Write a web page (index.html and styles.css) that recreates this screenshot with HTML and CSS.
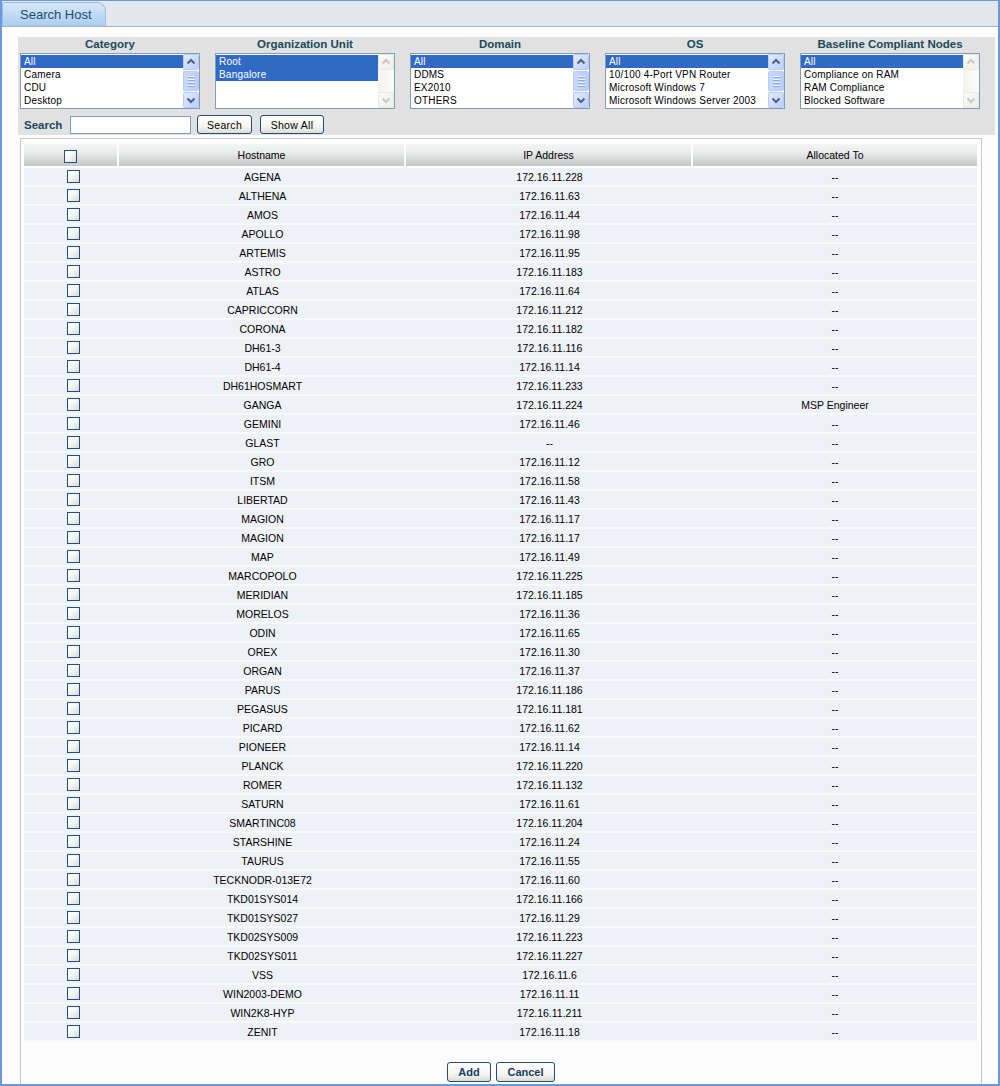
FILE: index.html
```html
<!DOCTYPE html>
<html lang="en">
<head>
    <meta charset="UTF-8" />
    <title>Search Host</title>
    <link rel="stylesheet" href="styles.css">
</head>
<body>
<div class="window">
    <div class="tab-bar">
        <div class="tab">Search Host</div>
    </div>

    <div class="filters">
        <div class="filter-row">
            <div class="filter">
                <div class="filter-title">Category</div>
                <div class="listbox">
                    <ul>
                        <li class="selected">All</li>
                        <li>Camera</li>
                        <li>CDU</li>
                        <li>Desktop</li>
                    </ul>
                    <div class="vscroll">
                        <span class="sb-btn"><svg viewBox="0 0 14 14"><path d="M3.5 8.5 L7 5 L10.5 8.5" /></svg></span>
                        <span class="sb-thumb"><i></i><i></i><i></i><i></i></span>
                        <span class="sb-btn"><svg viewBox="0 0 14 14"><path d="M3.5 5.5 L7 9 L10.5 5.5" /></svg></span>
                    </div>
                </div>
            </div>
            <div class="filter">
                <div class="filter-title">Organization Unit</div>
                <div class="listbox">
                    <ul>
                        <li class="selected">Root</li>
                        <li class="selected">Bangalore</li>
                    </ul>
                    <div class="vscroll disabled">
                        <span class="sb-btn"><svg viewBox="0 0 14 14"><path d="M3.5 8.5 L7 5 L10.5 8.5" /></svg></span>
                        <span class="sb-btn"><svg viewBox="0 0 14 14"><path d="M3.5 5.5 L7 9 L10.5 5.5" /></svg></span>
                    </div>
                </div>
            </div>
            <div class="filter">
                <div class="filter-title">Domain</div>
                <div class="listbox">
                    <ul>
                        <li class="selected">All</li>
                        <li>DDMS</li>
                        <li>EX2010</li>
                        <li>OTHERS</li>
                    </ul>
                    <div class="vscroll">
                        <span class="sb-btn"><svg viewBox="0 0 14 14"><path d="M3.5 8.5 L7 5 L10.5 8.5" /></svg></span>
                        <span class="sb-thumb"><i></i><i></i><i></i><i></i></span>
                        <span class="sb-btn"><svg viewBox="0 0 14 14"><path d="M3.5 5.5 L7 9 L10.5 5.5" /></svg></span>
                    </div>
                </div>
            </div>
            <div class="filter">
                <div class="filter-title">OS</div>
                <div class="listbox">
                    <ul>
                        <li class="selected">All</li>
                        <li>10/100 4-Port VPN Router</li>
                        <li>Microsoft Windows 7</li>
                        <li>Microsoft Windows Server 2003</li>
                    </ul>
                    <div class="vscroll">
                        <span class="sb-btn"><svg viewBox="0 0 14 14"><path d="M3.5 8.5 L7 5 L10.5 8.5" /></svg></span>
                        <span class="sb-thumb"><i></i><i></i><i></i><i></i></span>
                        <span class="sb-btn"><svg viewBox="0 0 14 14"><path d="M3.5 5.5 L7 9 L10.5 5.5" /></svg></span>
                    </div>
                </div>
            </div>
            <div class="filter">
                <div class="filter-title">Baseline Compliant Nodes</div>
                <div class="listbox">
                    <ul>
                        <li class="selected">All</li>
                        <li>Compliance on RAM</li>
                        <li>RAM Compliance</li>
                        <li>Blocked Software</li>
                    </ul>
                    <div class="vscroll disabled">
                        <span class="sb-btn"><svg viewBox="0 0 14 14"><path d="M3.5 8.5 L7 5 L10.5 8.5" /></svg></span>
                        <span class="sb-btn"><svg viewBox="0 0 14 14"><path d="M3.5 5.5 L7 9 L10.5 5.5" /></svg></span>
                    </div>
                </div>
            </div>
        </div>

        <div class="search-row">
            <label class="search-label" for="search">Search</label>
            <input class="search-input" type="text" id="search" />
            <button class="btn btn-search">Search</button>
            <button class="btn btn-showall">Show All</button>
        </div>
    </div>

    <div class="results">
        <table class="hosts">
            <colgroup>
                <col style="width:95px">
                <col style="width:287px">
                <col style="width:287px">
                <col style="width:284px">
            </colgroup>
            <thead>
                <tr>
                    <th><span class="check"></span></th>
                    <th>Hostname</th>
                    <th>IP Address</th>
                    <th>Allocated To</th>
                </tr>
            </thead>
            <tbody>
                <tr><td><span class="check"></span></td><td>AGENA</td><td>172.16.11.228</td><td>--</td></tr>
                <tr><td><span class="check"></span></td><td>ALTHENA</td><td>172.16.11.63</td><td>--</td></tr>
                <tr><td><span class="check"></span></td><td>AMOS</td><td>172.16.11.44</td><td>--</td></tr>
                <tr><td><span class="check"></span></td><td>APOLLO</td><td>172.16.11.98</td><td>--</td></tr>
                <tr><td><span class="check"></span></td><td>ARTEMIS</td><td>172.16.11.95</td><td>--</td></tr>
                <tr><td><span class="check"></span></td><td>ASTRO</td><td>172.16.11.183</td><td>--</td></tr>
                <tr><td><span class="check"></span></td><td>ATLAS</td><td>172.16.11.64</td><td>--</td></tr>
                <tr><td><span class="check"></span></td><td>CAPRICCORN</td><td>172.16.11.212</td><td>--</td></tr>
                <tr><td><span class="check"></span></td><td>CORONA</td><td>172.16.11.182</td><td>--</td></tr>
                <tr><td><span class="check"></span></td><td>DH61-3</td><td>172.16.11.116</td><td>--</td></tr>
                <tr><td><span class="check"></span></td><td>DH61-4</td><td>172.16.11.14</td><td>--</td></tr>
                <tr><td><span class="check"></span></td><td>DH61HOSMART</td><td>172.16.11.233</td><td>--</td></tr>
                <tr><td><span class="check"></span></td><td>GANGA</td><td>172.16.11.224</td><td>MSP Engineer</td></tr>
                <tr><td><span class="check"></span></td><td>GEMINI</td><td>172.16.11.46</td><td>--</td></tr>
                <tr><td><span class="check"></span></td><td>GLAST</td><td>--</td><td>--</td></tr>
                <tr><td><span class="check"></span></td><td>GRO</td><td>172.16.11.12</td><td>--</td></tr>
                <tr><td><span class="check"></span></td><td>ITSM</td><td>172.16.11.58</td><td>--</td></tr>
                <tr><td><span class="check"></span></td><td>LIBERTAD</td><td>172.16.11.43</td><td>--</td></tr>
                <tr><td><span class="check"></span></td><td>MAGION</td><td>172.16.11.17</td><td>--</td></tr>
                <tr><td><span class="check"></span></td><td>MAGION</td><td>172.16.11.17</td><td>--</td></tr>
                <tr><td><span class="check"></span></td><td>MAP</td><td>172.16.11.49</td><td>--</td></tr>
                <tr><td><span class="check"></span></td><td>MARCOPOLO</td><td>172.16.11.225</td><td>--</td></tr>
                <tr><td><span class="check"></span></td><td>MERIDIAN</td><td>172.16.11.185</td><td>--</td></tr>
                <tr><td><span class="check"></span></td><td>MORELOS</td><td>172.16.11.36</td><td>--</td></tr>
                <tr><td><span class="check"></span></td><td>ODIN</td><td>172.16.11.65</td><td>--</td></tr>
                <tr><td><span class="check"></span></td><td>OREX</td><td>172.16.11.30</td><td>--</td></tr>
                <tr><td><span class="check"></span></td><td>ORGAN</td><td>172.16.11.37</td><td>--</td></tr>
                <tr><td><span class="check"></span></td><td>PARUS</td><td>172.16.11.186</td><td>--</td></tr>
                <tr><td><span class="check"></span></td><td>PEGASUS</td><td>172.16.11.181</td><td>--</td></tr>
                <tr><td><span class="check"></span></td><td>PICARD</td><td>172.16.11.62</td><td>--</td></tr>
                <tr><td><span class="check"></span></td><td>PIONEER</td><td>172.16.11.14</td><td>--</td></tr>
                <tr><td><span class="check"></span></td><td>PLANCK</td><td>172.16.11.220</td><td>--</td></tr>
                <tr><td><span class="check"></span></td><td>ROMER</td><td>172.16.11.132</td><td>--</td></tr>
                <tr><td><span class="check"></span></td><td>SATURN</td><td>172.16.11.61</td><td>--</td></tr>
                <tr><td><span class="check"></span></td><td>SMARTINC08</td><td>172.16.11.204</td><td>--</td></tr>
                <tr><td><span class="check"></span></td><td>STARSHINE</td><td>172.16.11.24</td><td>--</td></tr>
                <tr><td><span class="check"></span></td><td>TAURUS</td><td>172.16.11.55</td><td>--</td></tr>
                <tr><td><span class="check"></span></td><td>TECKNODR-013E72</td><td>172.16.11.60</td><td>--</td></tr>
                <tr><td><span class="check"></span></td><td>TKD01SYS014</td><td>172.16.11.166</td><td>--</td></tr>
                <tr><td><span class="check"></span></td><td>TKD01SYS027</td><td>172.16.11.29</td><td>--</td></tr>
                <tr><td><span class="check"></span></td><td>TKD02SYS009</td><td>172.16.11.223</td><td>--</td></tr>
                <tr><td><span class="check"></span></td><td>TKD02SYS011</td><td>172.16.11.227</td><td>--</td></tr>
                <tr><td><span class="check"></span></td><td>VSS</td><td>172.16.11.6</td><td>--</td></tr>
                <tr><td><span class="check"></span></td><td>WIN2003-DEMO</td><td>172.16.11.11</td><td>--</td></tr>
                <tr><td><span class="check"></span></td><td>WIN2K8-HYP</td><td>172.16.11.211</td><td>--</td></tr>
                <tr><td><span class="check"></span></td><td>ZENIT</td><td>172.16.11.18</td><td>--</td></tr>
            </tbody>
        </table>

        <div class="actions">
            <button class="btn btn-strong btn-add">Add</button>
            <button class="btn btn-strong btn-cancel">Cancel</button>
        </div>
    </div>
</div>
</body>
</html>
```

FILE: styles.css
```css
body {
    margin: 0;
    font-family: "Liberation Sans", Arial, sans-serif;
    font-size: 11px;
    color: #000;
    background: #fff;
}

.window {
    height: 1086px;
    box-sizing: border-box;
    border: 2px solid #6b98d8;
    border-top-width: 1px;
    display: flex;
    flex-direction: column;
    background: #fdfdfd;
}

.tab-bar {
    height: 25px;
    background: #e3e8ec;
    border-bottom: 1px solid #a9b3b5;
    display: flex;
    align-items: flex-end;
}

.tab {
    height: 24px;
    width: 104px;
    box-sizing: border-box;
    border: 1px solid #97bde6;
    border-bottom: none;
    border-radius: 3px 9px 0 0;
    background: linear-gradient(#d8e8f8, #a9cdf1);
    color: #1e4c6c;
    font-size: 13px;
    line-height: 23px;
    padding-left: 17px;
}

/* filtros */
.filters {
    margin: 10px 3px 0 16px;
    background: #e1e1e1;
    padding: 1px 2px 0;
    height: 98px;
    box-sizing: border-box;
}

.filter-row {
    display: flex;
    gap: 15px;
}

.filter {
    width: 180px;
}

.filter-title {
    text-align: center;
    font-weight: bold;
    font-size: 11.5px;
    color: #1b4a5d;
    height: 15px;
    line-height: 12px;
}

.listbox {
    height: 56px;
    box-sizing: border-box;
    border: 1px solid #7f9db9;
    background: #fff;
    display: flex;
}

.listbox ul {
    flex: 1;
    margin: 0;
    padding: 1px 0 0;
    list-style: none;
    overflow: hidden;
}

.listbox li {
    height: 13px;
    line-height: 13px;
    padding-left: 3px;
    font-size: 10px;
    letter-spacing: 0.2px;
    white-space: nowrap;
    overflow: hidden;
}

.listbox li.selected {
    background: #316ac5;
    color: #fff;
}

.vscroll {
    width: 16px;
    display: flex;
    flex-direction: column;
    justify-content: space-between;
    background: linear-gradient(90deg, #f3f2ec, #fdfdfb);
}

.sb-btn {
    height: 16px;
    box-sizing: border-box;
    border: 1px solid #b7cbf6;
    border-radius: 2px;
    background: linear-gradient(135deg, #e2ebfe, #bccff9);
    display: flex;
    align-items: center;
    justify-content: center;
}

.sb-btn svg {
    width: 14px;
    height: 14px;
    fill: none;
    stroke: #4d6185;
    stroke-width: 2;
}

.sb-thumb {
    height: 20px;
    box-sizing: border-box;
    border: 1px solid #b7cbf6;
    border-radius: 2px;
    background: linear-gradient(90deg, #c9d8fc, #bacdf8);
    display: flex;
    flex-direction: column;
    align-items: center;
    justify-content: center;
    gap: 1px;
}

.sb-thumb i {
    display: block;
    width: 7px;
    height: 1px;
    background: #eef3fe;
    border-bottom: 1px solid #8eaae6;
}

.vscroll.disabled .sb-btn {
    border-color: #e9e9e2;
    background: linear-gradient(135deg, #fbfbf8, #eeede6);
}

.vscroll.disabled .sb-btn svg {
    stroke: #c9c8bf;
}

.search-row {
    display: flex;
    align-items: center;
    margin-top: 6px;
    padding-left: 4px;
}

.search-label {
    font-weight: bold;
    font-size: 11.5px;
    color: #1b4a5d;
    width: 46px;
}

.search-input {
    width: 121px;
    height: 18px;
    box-sizing: border-box;
    border: 1px solid #7f9db9;
    margin: 0 6px 0 0;
    padding: 0 2px;
}

.btn {
    height: 19px;
    box-sizing: border-box;
    border: 1px solid #1f4e79;
    border-radius: 3px;
    background: linear-gradient(#ffffff, #f3f3ee 65%, #dedcd3);
    font-family: inherit;
    font-size: 10.5px;
    letter-spacing: 0.3px;
    color: #000;
    padding: 0;
}

.btn-search {
    width: 55px;
    margin-right: 8px;
}

.btn-showall {
    width: 64px;
}

/* tabela */
.results {
    flex: 1;
    margin: 3px 16px 0 18px;
    border: 1px solid #c9c9c9;
    border-bottom: none;
    padding: 5px 3px 0;
    background: #fdfdfd;
}

.hosts {
    width: 953px;
    border-collapse: separate;
    border-spacing: 0;
    table-layout: fixed;
}

.hosts th {
    padding: 0;
    line-height: 22px;
    font-weight: normal;
    font-size: 10.5px;
    background: linear-gradient(#f4f6f6, #e7e9e9 45%, #d4d7d7 70%, #c4c8c8);
    border-right: 2px solid #fdfdfd;
    border-bottom: 2px solid #fdfdfd;
}

.hosts th:last-child {
    border-right: none;
}

.hosts td {
    padding: 2px 0 0;
    line-height: 15px;
    text-align: center;
    background: #eef2f6;
    border-bottom: 2px solid #f7f9fb;
    font-size: 10.5px;
    white-space: nowrap;
}

.hosts td:first-child {
    padding-left: 4px;
}

.check {
    display: inline-block;
    width: 13px;
    height: 13px;
    box-sizing: border-box;
    border: 1px solid #1c5180;
    background: linear-gradient(135deg, #ffffff 25%, #dadad4);
    vertical-align: middle;
}

.hosts td .check {
    vertical-align: top;
}

.actions {
    display: flex;
    justify-content: center;
    gap: 5px;
    margin-top: 20px;
}

.btn-strong {
    height: 20px;
    font-weight: bold;
    font-size: 11px;
    letter-spacing: 0;
    color: #163d63;
}

.btn-add {
    width: 44px;
}

.btn-cancel {
    width: 59px;
}
```
